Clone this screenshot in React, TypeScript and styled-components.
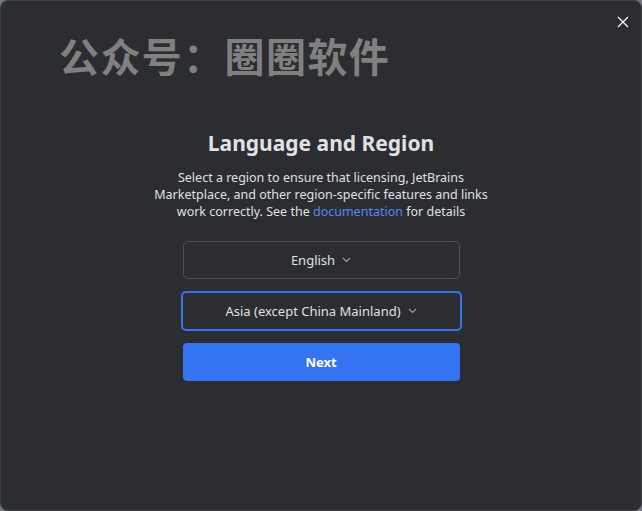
import React from "react";
import styled, { createGlobalStyle } from "styled-components";

const Global = createGlobalStyle`
  html, body { margin: 0; padding: 0; background: #6f7780; }
  body { width: 642px; height: 511px; overflow: hidden; }
  #root { width: 642px; height: 511px; }
`;

const Window = styled.div`
  box-sizing: border-box;
  width: 642px;
  height: 511px;
  background: #2b2d30;
  border: 1px solid #3d4045;
  border-radius: 8px;
  display: flex;
  flex-direction: column;
  font-family: "Noto Sans", "Open Sans", sans-serif;
  color: #dfe1e5;
`;

const TopBar = styled.div`
  display: flex;
  justify-content: flex-end;
  padding: 13px 10px 0 0;
  height: 20px;
`;

const Close = styled.button`
  width: 16px;
  height: 16px;
  padding: 0;
  border: none;
  background: transparent;
  display: flex;
  align-items: center;
  justify-content: center;
  cursor: pointer;
`;

const Watermark = styled.div`
  font-family: "Noto Sans CJK SC", sans-serif;
  font-weight: 700;
  font-size: 40px;
  line-height: 48px;
  color: #808080;
  padding-left: 58px;
  margin-top: -3px;
  letter-spacing: 1.4px;
`;

const Content = styled.div`
  display: flex;
  flex-direction: column;
  align-items: center;
  padding-top: 50px;
`;

const Title = styled.h1`
  margin: 0;
  font-size: 21px;
  font-weight: 700;
  line-height: 28px;
  color: #dfe1e5;
`;

const Desc = styled.div`
  margin: 12px 0 0;
  width: 360px;
  text-align: center;
  font-size: 12.5px;
  line-height: 17px;
  color: #dfe1e5;
`;

const Link = styled.span`
  color: #548af7;
`;

const Form = styled.div`
  display: flex;
  flex-direction: column;
  gap: 12px;
  margin-top: 21px;
  width: 279px;
`;

const Select = styled.div<{ $focused?: boolean }>`
  box-sizing: border-box;
  height: ${(p) => (p.$focused ? 40 : 38)}px;
  margin: ${(p) => (p.$focused ? "0 -1px" : "0 1px")};
  border: ${(p) => (p.$focused ? "2px solid #3574f0" : "1px solid #4e5157")};
  border-radius: 5px;
  display: flex;
  align-items: center;
  justify-content: center;
  gap: 7px;
  font-size: 13px;
  color: #dfe1e5;
`;

const NextButton = styled.button`
  box-sizing: border-box;
  height: 38px;
  margin: 0 1px;
  border: none;
  border-radius: 4px;
  background: #3574f0;
  color: #ffffff;
  font-family: "Noto Sans", "Open Sans", sans-serif;
  font-weight: 700;
  font-size: 13px;
`;

const Chevron = () => (
  <svg width="9" height="6" viewBox="0 0 9 6">
    <path d="M1 1l3.5 3.5L8 1" stroke="#9da0a8" strokeWidth="1.1" fill="none" />
  </svg>
);

export default function App() {
  return (
    <>
      <Global />
      <Window>
        <TopBar>
          <Close aria-label="close">
            <svg width="12" height="12" viewBox="0 0 12 12">
              <path d="M1 1l10 10M11 1L1 11" stroke="#ffffff" strokeWidth="1.2" />
            </svg>
          </Close>
        </TopBar>
        <Watermark>公众号：圈圈软件</Watermark>
        <Content>
          <Title>Language and Region</Title>
          <Desc>
            Select a region to ensure that licensing, JetBrains Marketplace, and other region-specific features and links
            work correctly. See the <Link>documentation</Link> for details
          </Desc>
          <Form>
            <Select>
              English <Chevron />
            </Select>
            <Select $focused>
              Asia (except China Mainland) <Chevron />
            </Select>
            <NextButton>Next</NextButton>
          </Form>
        </Content>
      </Window>
    </>
  );
}
